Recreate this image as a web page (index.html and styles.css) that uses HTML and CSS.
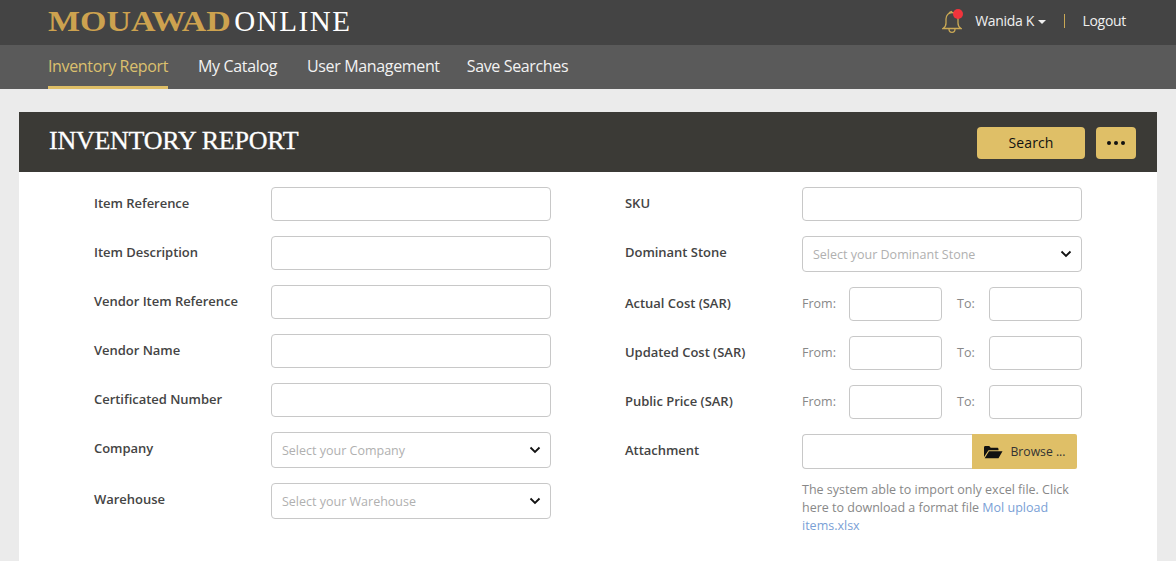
FILE: index.html
```html
<!DOCTYPE html>
<html lang="en">
<head>
  <meta charset="UTF-8">
  <title>Inventory Report - Mouawad Online</title>
  <link rel="stylesheet" href="styles.css">
</head>
<body>
  <header class="topbar">
    <div class="logo"><span class="logo-gold">MOUAWAD</span> ONLINE</div>
    <div class="user-area">
      <span class="bell">
        <svg width="20" height="24" viewBox="0 0 20 24" fill="none" stroke="#c9a855" stroke-width="1.300">
          <path d="M1 18.500c2.200-1.300 3-3 3-5.500V9c0-3.800 2.600-6.500 6-6.500s6 2.700 6 6.500v4c0 2.500.8 4.200 3 5.500z"/>
          <path d="M7 3.500C7.500 2 8.500 1.300 10 1.300"/>
          <path d="M7 19c0 4.500 6 4.500 6 0"/>
        </svg>
        <i class="bell-dot"></i>
      </span>
      <a class="user-name" href="#">Wanida K <i class="caret"></i></a>
      <span class="sep"></span>
      <a class="logout" href="#">Logout</a>
    </div>
  </header>

  <nav class="mainnav">
    <a class="active" href="#">Inventory Report</a>
    <a href="#">My Catalog</a>
    <a href="#">User Management</a>
    <a href="#">Save Searches</a>
  </nav>

  <main class="card">
    <div class="card-head">
      <h1>INVENTORY REPORT</h1>
      <div class="card-actions">
        <button class="btn btn-search">Search</button>
        <button class="btn btn-more"><i></i><i></i><i></i></button>
      </div>
    </div>

    <form class="card-body">
      <div class="col">
        <div class="row"><label>Item Reference</label><input type="text"></div>
        <div class="row"><label>Item Description</label><input type="text"></div>
        <div class="row"><label>Vendor Item Reference</label><input type="text"></div>
        <div class="row"><label>Vendor Name</label><input type="text"></div>
        <div class="row"><label>Certificated Number</label><input type="text"></div>
        <div class="row">
          <label>Company</label>
          <div class="select">
            <span>Select your Company</span>
            <svg width="12" height="8" viewBox="0 0 12 8"><path d="M1.500 1.500 6 6l4.500-4.500" fill="none" stroke="#111" stroke-width="1.800"/></svg>
          </div>
        </div>
        <div class="row">
          <label>Warehouse</label>
          <div class="select">
            <span>Select your Warehouse</span>
            <svg width="12" height="8" viewBox="0 0 12 8"><path d="M1.500 1.500 6 6l4.500-4.500" fill="none" stroke="#111" stroke-width="1.800"/></svg>
          </div>
        </div>
      </div>

      <div class="col col-right">
        <div class="row"><label>SKU</label><input type="text"></div>
        <div class="row">
          <label>Dominant Stone</label>
          <div class="select">
            <span>Select your Dominant Stone</span>
            <svg width="12" height="8" viewBox="0 0 12 8"><path d="M1.500 1.500 6 6l4.500-4.500" fill="none" stroke="#111" stroke-width="1.800"/></svg>
          </div>
        </div>
        <div class="row">
          <label>Actual Cost (SAR)</label>
          <div class="range"><span>From:</span><input type="text"><span class="to">To:</span><input type="text"></div>
        </div>
        <div class="row">
          <label>Updated Cost (SAR)</label>
          <div class="range"><span>From:</span><input type="text"><span class="to">To:</span><input type="text"></div>
        </div>
        <div class="row">
          <label>Public Price (SAR)</label>
          <div class="range"><span>From:</span><input type="text"><span class="to">To:</span><input type="text"></div>
        </div>
        <div class="row row-attach">
          <label>Attachment</label>
          <div class="attach">
            <div class="file">
              <span class="file-name"></span>
              <span class="browse">
                <svg width="20" height="14" viewBox="0 0 20 14"><path d="M1 12V2.500C1 1.700 1.500 1 2.300 1h3.900l1.500 1.700h6.500c.8 0 1.300.6 1.300 1.300v1.200H5.500L1 12zM6 6.300H19.500l-4 7H1.700z" fill="#111"/></svg>
                Browse ...
              </span>
            </div>
            <p class="help">The system able to import only excel file. Click here to download a format file <a href="#">Mol upload items.xlsx</a></p>
          </div>
        </div>
      </div>
    </form>
  </main>
</body>
</html>
```

FILE: styles.css
```css
* {
  box-sizing: border-box;
}
html, body {
  height: 100%;
}
body {
  margin: 0;
  background: #ebebeb;
  font-family: 'Open Sans', sans-serif;
  color: #333;
  overflow: hidden;
}
a {
  text-decoration: none;
}
.topbar {
  height: 45px;
  background: #444;
  display: flex;
  align-items: center;
  justify-content: space-between;
  padding: 0 50px 0 48px;
}
.logo {
  font-family: 'Liberation Serif', serif;
  font-size: 29px;
  letter-spacing: 1.600px;
  color: #fff;
  margin-top: -2px;
}
.logo-gold {
  display: inline-block;
  margin-right: 21px;
  color: #cda24f;
  font-weight: bold;
  letter-spacing: 0;
  transform: scaleX(1.170);
  transform-origin: left;
}
.user-area {
  display: flex;
  align-items: center;
  font-size: 14px;
  letter-spacing: -.3px;
  color: #f0f0f0;
  padding-bottom: 4px;
}
.user-area a {
  color: #f0f0f0;
}
.bell {
  position: relative;
  display: flex;
  margin-top: 2px;
  margin-right: 13px;
}
.bell-dot {
  position: absolute;
  top: -1px;
  right: -1px;
  width: 10px;
  height: 10px;
  border-radius: 50%;
  background: #f0343c;
}
.caret {
  display: inline-block;
  margin-left: 1px;
  vertical-align: 2px;
  border-top: 4px solid #f0f0f0;
  border-left: 4px solid transparent;
  border-right: 4px solid transparent;
}
.sep {
  width: 1px;
  height: 14px;
  background: #c9a855;
  margin: 0 17px 0 18px;
}
.mainnav {
  height: 44px;
  background: #5a5a5a;
  display: flex;
  padding-left: 48px;
  gap: 30px;
}
.mainnav a {
  font-size: 16px;
  line-height: 42px;
  color: #f2f2f2;
  letter-spacing: -.35px;
}
.mainnav a:nth-child(4) {
  margin-left: -3px;
}
.mainnav a.active {
  color: #dcc06e;
  border-bottom: 3px solid #dfbf67;
}
.card {
  margin: 23px 19px 0;
  background: #fff;
  height: 460px;
}
.card-head {
  height: 60px;
  background: #3b3a36;
  display: flex;
  align-items: center;
  justify-content: space-between;
  padding: 0 21px 0 30px;
}
.card-head h1 {
  margin: -2px 0 0;
  font-family: 'Liberation Serif', serif;
  font-size: 26px;
  font-weight: normal;
  letter-spacing: -.25px;
  color: #fff;
  -webkit-text-stroke: .3px #fff;
}
.card-actions {
  display: flex;
  gap: 11px;
  margin-top: 2px;
}
.btn {
  height: 32px;
  border: none;
  border-radius: 4px;
  background: #dfbf67;
  font-family: 'Open Sans', sans-serif;
  color: #111;
}
.btn-search {
  width: 108px;
  padding-bottom: 3px;
  font-size: 14px;
  letter-spacing: .1px;
}
.btn-more {
  width: 40px;
  display: flex;
  align-items: center;
  justify-content: center;
  gap: 3px;
}
.btn-more i {
  width: 4px;
  height: 4px;
  border-radius: 50%;
  background: #111;
}
.card-body {
  display: flex;
  padding: 15px 0 0 75px;
}
.col {
  width: 531px;
}
.row {
  display: flex;
  margin-bottom: 15px;
}
.row label {
  width: 177px;
  font-size: 13px;
  font-weight: 600;
  letter-spacing: -.03px;
  line-height: 32px;
  color: #444;
}
.row input {
  width: 280px;
  height: 34px;
  border: 1px solid #c8c8c8;
  border-radius: 4px;
  background: #fff;
}
.select {
  width: 280px;
  height: 36px;
  border: 1px solid #c8c8c8;
  border-radius: 4px;
  display: flex;
  align-items: center;
  justify-content: space-between;
  padding: 0 9px 0 10px;
  font-size: 12.500px;
  color: #b0b0b0;
}
.range {
  width: 280px;
  display: flex;
  align-items: center;
  font-size: 12.500px;
  color: #888;
  padding-bottom: 1px;
}
.range span {
  width: 47px;
}
.range span.to {
  width: 47px;
  padding-left: 15px;
}
.row .range input {
  width: 93px;
  margin-bottom: -1px;
}
.attach {
  width: 280px;
}
.file {
  display: flex;
  height: 35px;
  width: 275px;
}
.file-name {
  flex: 1;
  border: 1px solid #c8c8c8;
  border-right: none;
  border-radius: 4px 0 0 4px;
}
.browse {
  width: 105px;
  background: #dfbf67;
  border-radius: 0 2px 2px 0;
  display: flex;
  align-items: center;
  justify-content: center;
  gap: 7px;
  font-size: 12.200px;
  color: #333;
}
.help {
  margin: 12px 0 0;
  font-size: 12.500px;
  line-height: 18px;
  color: #888;
}
.help a {
  color: #7a9fd6;
}
```
